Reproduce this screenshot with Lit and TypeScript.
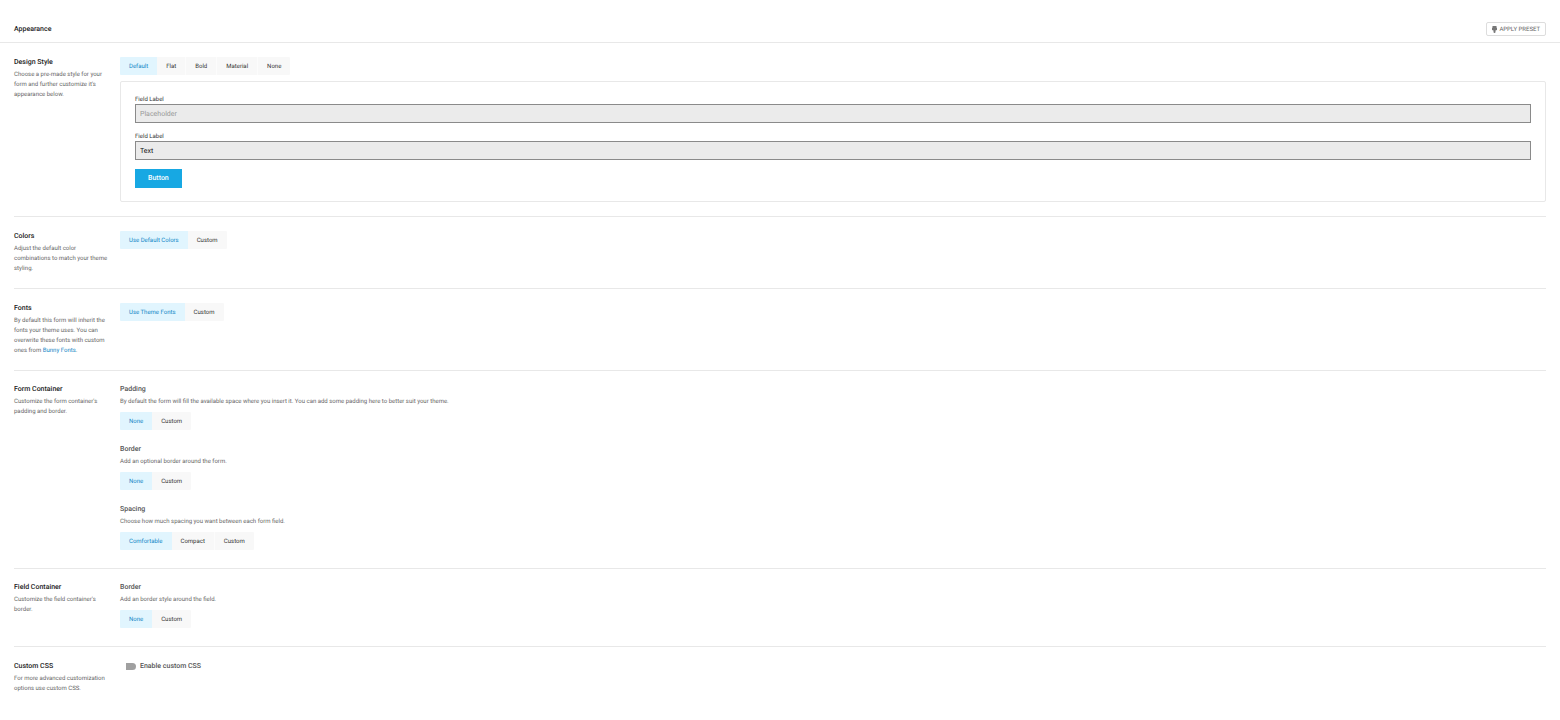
import { LitElement, html, css, nothing, TemplateResult } from "lit";
import { customElement, property, state } from "lit/decorators.js";
import { classMap } from "lit/directives/class-map.js";

@customElement("option-tabs")
class OptionTabs extends LitElement {
  @property({ type: Array }) options: string[] = [];
  @property() label = "";
  @state() selected = 0;

  static styles = css`
    :host {
      display: block;
    }
    .tabs {
      display: flex;
    }
    .tab {
      height: 18px;
      padding: 1px 9px 0;
      border: 0;
      border-right: 1px solid #fcfcfc;
      background: #f8f8f8;
      color: #333;
      font: 400 6px/17px Roboto, sans-serif;
      text-rendering: geometricPrecision;
      white-space: nowrap;
      cursor: pointer;
    }
    .tab:first-child {
      border-radius: 1px 0 0 1px;
    }
    .tab:last-child {
      border-right: 0;
      border-radius: 0 1px 1px 0;
    }
    .active {
      border-right: 0;
      background: #e1f5fe;
      color: #0f86c6;
    }
  `;

  render() {
    return html`<div class="tabs" role="group" aria-label=${this.label}>
      ${this.options.map(
        (name, i) => html`<button
          type="button"
          class=${classMap({ tab: true, active: i === this.selected })}
          aria-pressed=${i === this.selected ? "true" : "false"}
          @click=${() => (this.selected = i)}
        >${name}</button>`
      )}
    </div>`;
  }
}

@customElement("app-root")
class AppRoot extends LitElement {
  static styles = css`
    :host {
      display: block;
      background: #fff;
      color: #666;
      font: 400 7px/10px Roboto, sans-serif;
      text-rendering: geometricPrecision;
    }
    * {
      box-sizing: border-box;
      text-rendering: geometricPrecision;
    }
    .header {
      display: flex;
      align-items: center;
      justify-content: space-between;
      padding: 22px 14px 6px;
      border-bottom: 1px solid #e8e8e8;
    }
    h1,
    h2,
    h3,
    p {
      margin: 0;
      font-size: 7px;
      line-height: 10px;
    }
    h1,
    h2 {
      font-weight: 500;
      color: #222;
    }
    h3 {
      font-weight: 500;
      color: #555;
    }
    p {
      font-size: 6px;
      font-weight: 400;
    }
    a {
      color: #0f86c6;
      text-decoration: none;
      font-weight: 400;
    }
    .preset {
      display: flex;
      align-items: center;
      gap: 2px;
      height: 14px;
      padding: 1px 5px 0;
      border: 1px solid #ddd;
      border-radius: 2px;
      background: #fff;
      color: #666;
      font: 400 6px/11px Roboto, sans-serif;
      text-transform: uppercase;
    }
    .preset svg {
      width: 5px;
      height: 7px;
    }
    .section {
      display: grid;
      grid-template-columns: 96px minmax(0, 1fr);
      column-gap: 10px;
      margin: 0 14px;
      padding: 14px 0;
      border-bottom: 1px solid #e8e8e8;
    }
    .section:last-child {
      border-bottom: 0;
    }
    .intro,
    .group {
      display: flex;
      flex-direction: column;
      gap: 3px;
    }
    .content {
      display: flex;
      flex-direction: column;
      gap: 14px;
    }
    .stack {
      display: flex;
      flex-direction: column;
      gap: 6px;
    }
    .group option-tabs {
      margin-top: 2px;
    }
    .section.grouped {
      padding: 13px 0 18px;
    }
    .preview {
      display: flex;
      flex-direction: column;
      align-items: stretch;
      gap: 9px;
      padding: 13px 14px;
      border: 1px solid #e8e8e8;
      border-radius: 2px;
    }
    .field {
      display: flex;
      flex-direction: column;
    }
    .field label {
      font-size: 6px;
      line-height: 9px;
      color: #333;
    }
    .field input {
      width: 100%;
      height: 19px;
      padding: 0 4px;
      border: 1px solid #8a8a8a;
      border-radius: 0;
      background: #ebebeb;
      color: #111;
      font: 400 7px/17px Roboto, sans-serif;
    }
    .field input::placeholder {
      color: #999;
      opacity: 1;
    }
    .submit {
      align-self: flex-start;
      height: 19px;
      padding: 0 13px;
      border: 0;
      background: #17a8e3;
      color: #fff;
      font: 500 7px/19px Roboto, sans-serif;
    }
    .switch {
      display: flex;
      align-items: center;
      gap: 4px;
      color: #555;
      font-weight: 500;
    }
    .switch input {
      appearance: none;
      width: 16px;
      height: 7px;
      margin: 0;
      border-radius: 4px;
      background: linear-gradient(to right, #fff 6px, #a0a0a0 6px);
    }
    .switch input:checked {
      background: linear-gradient(to left, #fff 6px, #17a8e3 6px);
    }
  `;

  private section(title: string, text: unknown, content: TemplateResult, grouped = false) {
    return html`<section class=${classMap({ section: true, grouped })}>
      <div class="intro"><h2>${title}</h2><p>${text}</p></div>
      <div class="content">${content}</div>
    </section>`;
  }

  private group(title: string, text: string, options: string[]) {
    return html`<div class="group">
      <h3>${title}</h3>
      <p>${text}</p>
      <option-tabs .label=${title} .options=${options}></option-tabs>
    </div>`;
  }

  private field(id: string, value: string, placeholder: string) {
    return html`<div class="field">
      <label for=${id}>Field Label</label>
      <input id=${id} type="text" .value=${value} placeholder=${placeholder || nothing} />
    </div>`;
  }

  render() {
    return html`
      <header class="header">
        <h1>Appearance</h1>
        <button type="button" class="preset">
          <svg viewBox="0 0 10 14" aria-hidden="true">
            <path fill="#777" d="M1 0h8v3l1 1v4L7 9v3a2 2 0 0 1-4 0V9L0 8V4l1-1z" />
          </svg>
          Apply Preset
        </button>
      </header>
      <main>
        ${this.section(
          "Design Style",
          "Choose a pre-made style for your form and further customize it's appearance below.",
          html`<div class="stack">
            <option-tabs
              label="Design Style"
              .options=${["Default", "Flat", "Bold", "Material", "None"]}
            ></option-tabs>
            <div class="preview">
              ${this.field("field-empty", "", "Placeholder")}
              ${this.field("field-filled", "Text", "")}
              <button type="button" class="submit">Button</button>
            </div>
          </div>`
        )}
        ${this.section(
          "Colors",
          "Adjust the default color combinations to match your theme styling.",
          html`<option-tabs label="Colors" .options=${["Use Default Colors", "Custom"]}></option-tabs>`
        )}
        ${this.section(
          "Fonts",
          html`By default this form will inherit the fonts your theme uses. You can overwrite these
            fonts with custom ones from <a href="#bunny-fonts">Bunny Fonts</a>.`,
          html`<option-tabs label="Fonts" .options=${["Use Theme Fonts", "Custom"]}></option-tabs>`
        )}
        ${this.section(
          "Form Container",
          "Customize the form container's padding and border.",
          html`${this.group(
            "Padding",
            "By default the form will fill the available space where you insert it. You can add some padding here to better suit your theme.",
            ["None", "Custom"]
          )}
          ${this.group("Border", "Add an optional border around the form.", ["None", "Custom"])}
          ${this.group("Spacing", "Choose how much spacing you want between each form field.", [
            "Comfortable",
            "Compact",
            "Custom",
          ])}`,
          true
        )}
        ${this.section(
          "Field Container",
          "Customize the field container's border.",
          this.group("Border", "Add an border style around the field.", ["None", "Custom"]),
          true
        )}
        ${this.section(
          "Custom CSS",
          "For more advanced customization options use custom CSS.",
          html`<label class="switch"><input type="checkbox" role="switch" />Enable custom CSS</label>`
        )}
      </main>
    `;
  }
}
